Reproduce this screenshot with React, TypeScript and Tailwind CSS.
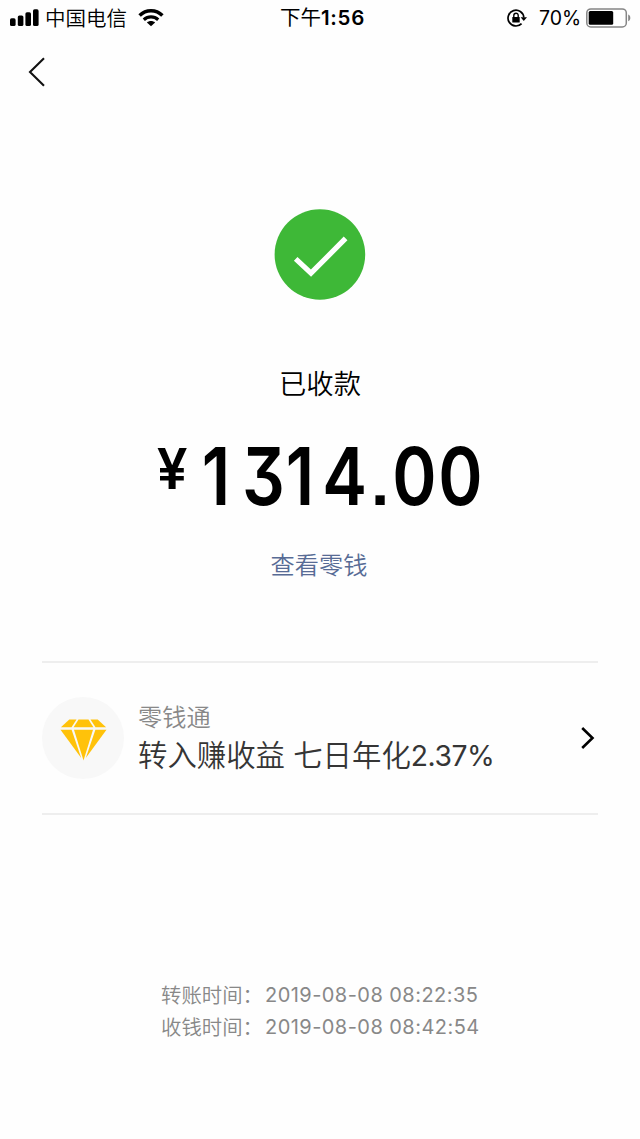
import React from "react";

const AMOUNT = [
  { ch: "1", cell: "w-[62px]" },
  { ch: "3", cell: "w-[33px]" },
  { ch: "1", cell: "w-[39px]" },
  { ch: "4", cell: "w-[51px]" },
  { ch: ".", cell: "w-[21px]" },
  { ch: "0", cell: "w-[46px]" },
  { ch: "0", cell: "w-[46px]" },
];

function StatusBar() {
  return (
    <div className="grid h-9 grid-cols-[240px_240px_160px] items-center text-black">
      <div className="flex h-9 items-center pl-[10px]">
        <svg width="29" height="18" viewBox="0 0 29 18" className="shrink-0">
          <rect x="0" y="9.3" width="5.6" height="7.7" rx="1.6" />
          <rect x="7.8" y="6.5" width="5.6" height="10.5" rx="1.6" />
          <rect x="15.4" y="3.3" width="5.6" height="13.7" rx="1.6" />
          <rect x="23" y="0.3" width="5.6" height="16.7" rx="1.6" />
        </svg>
        <span className="ml-[6px] whitespace-nowrap pt-[2px] text-[20.5px] font-[350] leading-[34px]">中国电信</span>
        <svg width="26" height="18" viewBox="0 0 26 18" className="ml-[11px] shrink-0" fill="none" stroke="#000">
          <path d="M1.6 6.6 C8 0.2 18 0.2 24.4 6.6" strokeWidth="3.5" />
          <path d="M5.8 10.8 C10 7 16 7 20.2 10.8" strokeWidth="3.2" />
          <path d="M13 17.2 L8.9 13.4 C11.2 11.4 14.8 11.4 17.1 13.4 Z" fill="#000" stroke="none" />
        </svg>
      </div>
      <div className="h-9 whitespace-nowrap pl-[40px] text-[20.5px] leading-9">
        下午<span className="font-semibold tracking-[0.7px]">1:56</span>
      </div>
      <div className="flex h-9 items-center pl-[27px]">
        <svg width="20" height="18" viewBox="0 0 20 18" className="shrink-0" fill="none" stroke="#000">
          <path d="M16.8 8.5 A7.9 7.9 0 1 0 14.6 14.6" strokeWidth="1.7" />
          <path d="M13.6 8.3 H20 L16.8 12 Z" fill="#000" stroke="none" />
          <rect x="5.3" y="8" width="7.4" height="5.5" rx="0.6" fill="#000" stroke="none" />
          <path d="M6.8 8.3 V6.4 a2.2 2.2 0 0 1 4.4 0 V8.3" strokeWidth="1.4" />
        </svg>
        <span className="ml-[12px] w-[47px] whitespace-nowrap text-[19.5px] leading-9">70%</span>
        <svg width="46" height="20" viewBox="0 0 46 20" className="shrink-0">
          <rect x="0.8" y="0.9" width="39.5" height="18" rx="4" fill="none" stroke="#858585" strokeWidth="1.5" />
          <rect x="2.7" y="3" width="24.5" height="13.8" rx="1.5" />
          <path d="M42.2 6.5 C45 7.4 45 12.4 42.2 13.3 Z" fill="#858585" />
        </svg>
      </div>
    </div>
  );
}

function Timestamp({ label, value }: { label: string; value: string }) {
  return (
    <div className="flex h-8 items-center whitespace-nowrap">
      <span className="w-[104px] pt-[2px] text-[20.4px] font-[350]">{label}：</span>
      <span className="text-[20px] tracking-[0.45px]">{value}</span>
    </div>
  );
}

export default function App() {
  return (
    <main className="flex h-[1139px] w-[640px] flex-col overflow-hidden bg-[#fefefe] font-['Inter','Noto_Sans_CJK_SC',sans-serif]">
      <StatusBar />
      <header className="flex h-[72px] items-center pl-[28px]">
        <button aria-label="返回">
          <svg width="18" height="30" viewBox="0 0 18 30" fill="none" stroke="#111" strokeWidth="2.1">
            <path d="M16 1.2 L2 15 L16 28.8" />
          </svg>
        </button>
      </header>

      <section className="flex h-[553px] flex-col items-center pt-[101px]">
        <svg width="92" height="91" viewBox="0 0 92 91" className="shrink-0">
          <circle cx="45.9" cy="45.5" r="45.3" fill="#3eb837" />
          <path d="M21.7 49.8 L37 64.2 L71.6 29.4" fill="none" stroke="#fff" strokeWidth="5.2" />
        </svg>
        <h1 className="mt-[65px] h-10 text-[27.3px] font-[350] leading-10 text-black">已收款</h1>
        <div className="mt-[25px] flex h-[90px] w-[640px] shrink-0 pl-[154px] font-semibold text-black">
          <span className="flex w-[37px] justify-center whitespace-nowrap text-[57px] leading-[77px]">
            <span className="scale-x-[0.96]">¥</span>
          </span>
          <span className="-ml-[6px] flex">
            {AMOUNT.map(({ ch, cell }, i) => (
              <span key={i} className={`${cell} flex shrink-0 justify-center text-[80px] leading-[90px]`}>
                {ch === "." ? (
                  <span className="origin-[50%_81%] scale-x-[0.82] scale-y-[0.82] pt-[4px] font-['Liberation_Sans'] font-bold">.</span>
                ) : (
                  <span className="scale-x-[0.84] pt-px [font-feature-settings:'cv09']">{ch}</span>
                )}
              </span>
            ))}
          </span>
        </div>
        <a className="mr-[2px] mt-[28px] h-9 text-[24.2px] font-[350] leading-9 text-[#576b95]">查看零钱</a>
      </section>

      <section className="mx-[42px] flex h-[154px] items-center border-y-2 border-[#eee]">
        <div className="flex size-[82px] items-center justify-center rounded-full bg-[#f8f8f8]">
          <svg width="47" height="42" viewBox="0 0 47 42" className="mt-[3px]" fill="#ffc20a">
            <path d="M9.3 0.5 H16.5 L11.5 8.3 H0.9 Z" />
            <path d="M18.5 0.5 H28.5 L33.4 8.3 H13.6 Z" />
            <path d="M30.5 0.5 H37.7 L46.1 8.3 H35.5 Z" />
            <path d="M0.5 10.8 H11.6 L21.2 39 Z" />
            <path d="M14 10.8 H33 L23.5 41.5 Z" />
            <path d="M35.4 10.8 H46.5 L25.8 39 Z" />
          </svg>
        </div>
        <div className="ml-[14px] flex-1 whitespace-nowrap">
          <div className="h-9 text-[24.2px] font-[350] leading-9 text-[#888]">零钱通</div>
          <div className="h-10 text-[29.4px] font-[350] leading-10 text-[#353535]">
            转入赚收益 七日年化<span className="text-[28.3px] font-normal tracking-[-0.5px]">2.37%</span>
          </div>
        </div>
        <svg width="14" height="24" viewBox="0 0 14 24" className="mr-[3px]" fill="none" stroke="#000" strokeWidth="2.6">
          <path d="M1.2 2 L11.5 12 L1.2 22" />
        </svg>
      </section>

      <footer className="mt-[164px] pl-[161px] text-[#888]">
        <Timestamp label="转账时间" value="2019-08-08 08:22:35" />
        <Timestamp label="收钱时间" value="2019-08-08 08:42:54" />
      </footer>
    </main>
  );
}
